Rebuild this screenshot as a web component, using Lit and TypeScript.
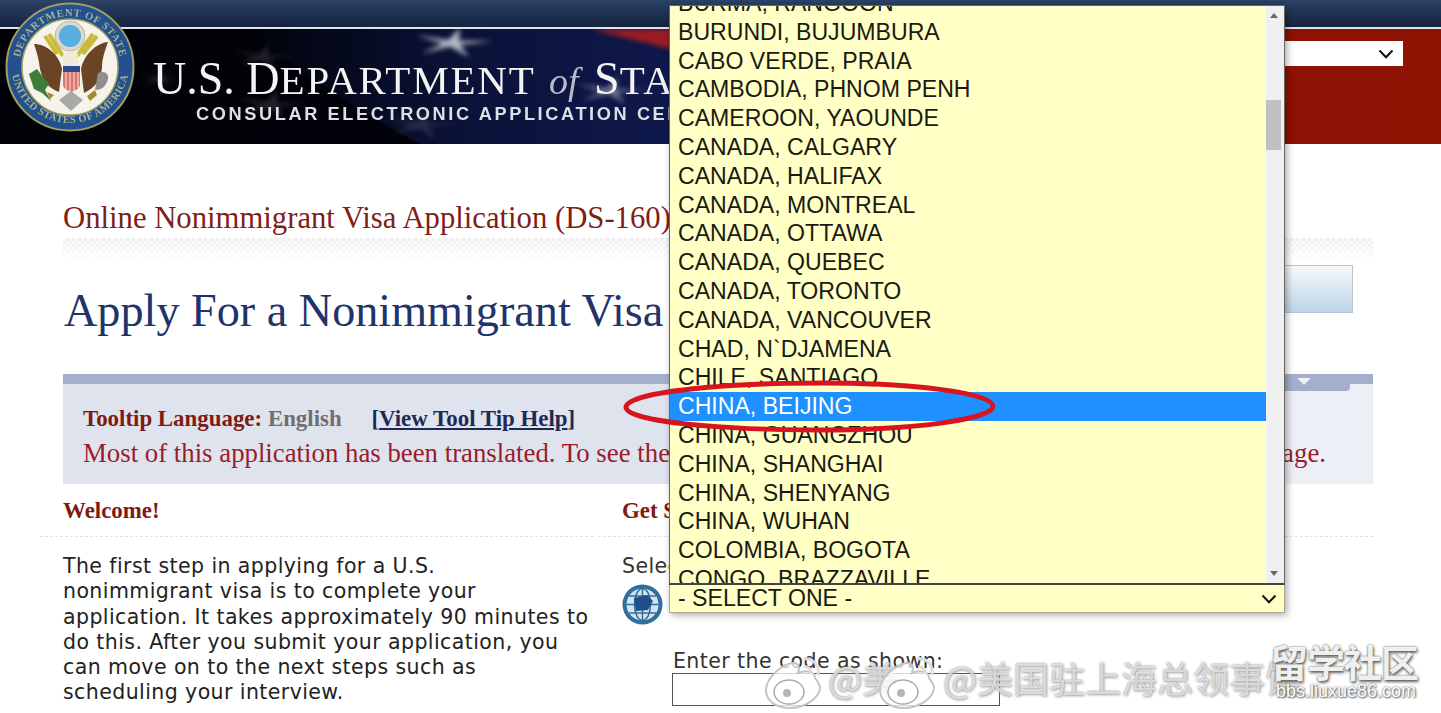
import { LitElement, html, css, svg } from "lit";
import { customElement } from "lit/decorators.js";

const OPTIONS = [
  "BURMA, RANGOON", "BURUNDI, BUJUMBURA", "CABO VERDE, PRAIA", "CAMBODIA, PHNOM PENH",
  "CAMEROON, YAOUNDE", "CANADA, CALGARY", "CANADA, HALIFAX", "CANADA, MONTREAL",
  "CANADA, OTTAWA", "CANADA, QUEBEC", "CANADA, TORONTO", "CANADA, VANCOUVER",
  "CHAD, N`DJAMENA", "CHILE, SANTIAGO", "CHINA, BEIJING", "CHINA, GUANGZHOU",
  "CHINA, SHANGHAI", "CHINA, SHENYANG", "CHINA, WUHAN", "COLOMBIA, BOGOTA", "CONGO, BRAZZAVILLE",
];

const star = (x: number, y: number, r: number, o: number) => {
  const pts: string[] = [];
  for (let i = 0; i < 10; i++) {
    const rad = i % 2 === 0 ? r : r * 0.22;
    const a = -Math.PI / 2 + (i * Math.PI) / 5 + 0.2;
    pts.push(`${(x + rad * Math.cos(a) * 1.6).toFixed(1)},${(y + rad * Math.sin(a) * 0.6).toFixed(1)}`);
  }
  return svg`<polygon points=${pts.join(" ")} fill="#fff" opacity=${o}></polygon>`;
};

const chevron = html`<svg width="16" height="10" viewBox="0 0 16 10"><path d="M1.5 1.5 8 8.2 14.5 1.5" fill="none" stroke="#111" stroke-width="2"/></svg>`;

const weibo = svg`<g>
  <path d="M4 36c0-11 14-25 26-27 7-1 8 5 6 10 8-3 17-2 17 5 1 2 4 4 5 9 0 11-15 21-30 21C14 54 4 47 4 36z" fill="#fff" fill-opacity=".75" stroke="#c4c4c4" stroke-width="2"/>
  <ellipse cx="27" cy="38" rx="15" ry="12" fill="#fff" stroke="#aaa" stroke-width="1.5"/>
  <circle cx="25" cy="39" r="4" fill="#b5b5b5"/>
  <path d="M41 5c9-2 17 6 15 16M42 13c4-1 8 3 7 7" fill="none" stroke="#ddd" stroke-width="3"/>
</g>`;

@customElement("app-root")
export class AppRoot extends LitElement {
  static styles = css`
    :host { display: block; position: relative; height: 713px; overflow: hidden; background: #fff; font-family: "Liberation Serif", serif; }
    .topband { height: 27px; background: linear-gradient(#2b4366, #14233f); border-bottom: 2px solid #dfe4ea; }
    .banner { position: relative; height: 115px; background: linear-gradient(90deg, #010207 0, #02030c 46%, #8a1205 52%, #8e1303 100%); display: flex; justify-content: space-between; overflow: hidden; }
    .flag { position: absolute; inset: 0; }
    .brand { position: relative; padding: 25px 0 0 153px; color: #f4f4f4; white-space: nowrap; }
    .dos { font-size: 46px; line-height: 50px; }
    .dos b { font-weight: 400; font-size: 41px; letter-spacing: 1.8px; }
    .dos i { font-size: 38px; color: #b8bcc8; margin: 0 4px 0 2px; }
    .cons { font: bold 18.2px "Liberation Sans", sans-serif; letter-spacing: 2.6px; margin: -2px 0 0 43px; color: #dcdfe4; }
    .lang { position: relative; margin: 12px 38px 0 0; width: 180px; height: 25px; background: #fff; display: flex; align-items: center; justify-content: flex-end; padding-right: 9px; box-sizing: border-box; }
    .seal { position: absolute; left: 5px; top: 2px; }

    .page-title { margin: 58px 0 0 63px; font-size: 30.7px; line-height: 32px; color: #7f2015; white-space: nowrap; }
    .dots { margin: 4px 68px 0 63px; height: 24px; background: repeating-conic-gradient(#eeeeee 0 25%, #fafafa 0 50%) 0 0 / 6px 6px; -webkit-mask-image: linear-gradient(#000, transparent); mask-image: linear-gradient(#000, transparent); }
    .head { height: 112px; margin: 0 88px 0 64px; display: flex; justify-content: space-between; align-items: flex-start; }
    h1 { margin: 23px 0 0; font-size: 46.2px; line-height: 52px; font-weight: 400; color: #22336b; white-space: nowrap; }
    .btn { margin-top: 3px; width: 200px; height: 48px; box-sizing: border-box; border: 1px solid #b9c6d4; background: linear-gradient(#f6f9fb, #bcd3e6); }

    .notice { margin: 0 68px 0 63px; height: 110px; background: linear-gradient(100deg, transparent 72%, #eceff5 92%), #dfe3ed; border-top: 10px solid #a3afcc; box-sizing: border-box; position: relative; padding: 22px 47px 0 20px; }
    .tab { position: absolute; right: 23px; top: -10px; width: 120px; height: 17px; background: #a3afcc; border-radius: 0 0 4px 0; }
    .tab::after { content: ""; position: absolute; right: 39px; top: 4px; border: 7px solid transparent; border-top: 7px solid #eef0f6; border-bottom: 0; }
    .tip { font-size: 22.9px; line-height: 26px; font-weight: 700; color: #7f1a12; white-space: nowrap; }
    .tip .en { color: #6f6f6f; }
    .tip a { color: #1d2a55; margin-left: 24px; }
    .tip a u { text-decoration: underline; }
    .msg { margin-top: 7px; display: flex; justify-content: space-between; font-size: 26.8px; line-height: 28px; color: #9b1c2b; white-space: nowrap; }

    .cols { display: grid; grid-template-columns: 553px 775px; column-gap: 5px; margin-left: 40px; }
    .col-h { height: 53px; border-bottom: 1px dashed #e2e2e2; padding: 14px 0 0 23px; box-sizing: border-box; font-size: 22.9px; line-height: 26px; font-weight: 700; color: #7f1a12; }
    .col-b { padding: 17px 0 0 23px; font: 20.5px/25.3px "DejaVu Sans", sans-serif; letter-spacing: .42px; color: #222; }
    .second .col-h, .second .col-b { padding-left: 24px; }
    .sel { color: #333; }
    .globe { display: block; margin-top: 5px; }
    .code { margin: 24px 0 0 51px; color: #333; white-space: nowrap; line-height: 25px; }
    .code-input { margin: -1px 0 0 -1px; width: 328px; height: 33px; box-sizing: border-box; border: 1px solid #555; background: #fff; }
    .code.box { margin-top: -1px; }

    .drop { position: absolute; left: 669px; top: 5px; width: 616px; height: 608px; display: flex; flex-direction: column; box-shadow: 2px 2px 7px rgba(0,0,0,.35); }
    .list { height: 580px; box-sizing: border-box; border: 1px solid #666; border-bottom: 2px solid #444; display: flex; background: #ffffc6; overflow: hidden; }
    .rows { flex: 1; overflow: hidden; font: 23.1px/28.8px "Liberation Sans", sans-serif; color: #1a1a12; }
    .rows-in { margin-top: -17px; }
    .row { height: 28.8px; padding-left: 8px; white-space: nowrap; }
    .row.on { background: #1e90ff; color: #fff; }
    .sb { width: 18px; background: #f0f0f0; position: relative; }
    .thumb { position: absolute; left: 0; top: 94px; width: 15px; height: 50px; background: #c1c1c1; }
    .arr { position: absolute; left: 4px; border: 4px solid transparent; }
    .arr.up { top: 7px; border-bottom: 5px solid #666; border-top: 0; }
    .arr.dn { bottom: 7px; border-top: 5px solid #666; border-bottom: 0; }
    .closed { flex: 1; border: 1px solid #a9a98c; border-top: 0; background: #ffffc6; display: flex; align-items: center; justify-content: space-between; padding: 0 7px 0 8px; font: 23.1px "Liberation Sans", sans-serif; color: #1a1a12; }

    .ellipse { position: absolute; left: 622px; top: 378px; pointer-events: none; }
    .wm { position: absolute; left: 762px; top: 640px; width: 679px; height: 73px; pointer-events: none; }
    .wm-logo { position: absolute; top: 14px; }
    .wm-t { position: absolute; top: 15px; font: 36px/44px "Noto Sans CJK SC", sans-serif; color: rgba(255,255,255,.6); text-shadow: 0 0 2px #999, 1px 1px 3px #aaa; white-space: nowrap; }
    .wm-brand { position: absolute; left: 508px; top: 0; font: 700 38px/42px "Noto Sans CJK SC", sans-serif; color: rgba(255,255,255,.92); text-shadow: 0 0 2px #555, 1px 2px 3px #666; white-space: nowrap; letter-spacing: -1px; }
    .wm-url { position: absolute; left: 514px; top: 40px; font: 18px/22px "Liberation Sans", sans-serif; color: #fff; text-shadow: 0 0 2px #555, 1px 1px 2px #666; white-space: nowrap; }
  `;

  private seal() {
    return html`<svg class="seal" width="130" height="130" viewBox="0 0 130 130">
      <defs>
        <path id="t1" d="M14 65a51 51 0 0 1 102 0"></path>
        <path id="t2" d="M6 62a59 59 0 0 0 118 0"></path>
      </defs>
      <circle cx="65" cy="65" r="63.5" fill="#23508f" stroke="#a2a060" stroke-width="2"></circle>
      <circle cx="65" cy="65" r="48" fill="#f6f4ea" stroke="#a2a060" stroke-width="1.5"></circle>
      <text font-family="Liberation Serif, serif" font-size="10.5" font-weight="700" fill="#a9b28a" letter-spacing=".8"><textPath href="#t1" startOffset="50%" text-anchor="middle">DEPARTMENT OF STATE</textPath></text>
      <text font-family="Liberation Serif, serif" font-size="10.5" font-weight="700" fill="#a9b28a" letter-spacing=".4"><textPath href="#t2" startOffset="50%" text-anchor="middle">UNITED STATES OF AMERICA</textPath></text>
      <circle cx="65" cy="34" r="15" fill="#d8d8cc" stroke="#b9b9a8"></circle>
      <circle cx="65" cy="34" r="11" fill="#58aede"></circle>
      <path d="M40 34 52 52 M92 34 78 52 M44 32l14 22M88 32 72 54" stroke="#c9bb3a" stroke-width="4" fill="none"></path>
      <path d="M29 42c12 0 25 10 28 25l-3 23c-10-4-16-10-19-23-1-8-3-17-6-25zM103 40c-3 9-6 16-6 26-2 14-8 20-18 25l-3-24c3-14 15-26 27-27z" fill="#6b4325"></path>
      <path d="M58 52c5-4 11-4 15 0l1 12H58z" fill="#efe9d8"></path>
      <path d="M58 64h17v6H58z" fill="#2b4c8c"></path>
      <path d="M58 70h17v13c0 3-4 5-8.500 7-5-2-8.500-4-8.500-7z" fill="#d9776f"></path>
      <path d="M61 70v17M65 70v19M69 70v19M73 70v16" stroke="#efc8bb" stroke-width="1.400"></path>
      <path d="M24 72l8-5 6 8 6 7-4 6 6 11-9-8-8-4-3-9z" fill="#3d7d37"></path>
      <path d="M93 71c7-3 11 1 10 6-2 8-7 11-13 11z" fill="#8f8f8f"></path>
      <path d="M54 98l12-9 12 9-12 11z" fill="#a9a9a5"></path>
      <path d="M42 90l7 3-4 4zM82 94l8-6 2 5-7 6z" fill="#a48a2d"></path>
    </svg>`;
  }

  render() {
    return html`
      <div class="topband"></div>
      <div class="banner">
        <svg class="flag" width="1441" height="115" viewBox="0 0 1441 115" preserveAspectRatio="none">
          <defs>
            <filter id="b"><feGaussianBlur stdDeviation="2.5"></feGaussianBlur></filter>
            <linearGradient id="n" x1="0" x2="1"><stop offset="0" stop-color="#0a1238" stop-opacity="0"></stop><stop offset=".45" stop-color="#0a1238"></stop><stop offset="1" stop-color="#101a50"></stop></linearGradient>
          </defs>
          <path d="M250 0H720V115H420Q320 60 250 0z" fill="url(#n)"></path>
          <path d="M590 0 720 32V0z" fill="#9b1c22" filter="url(#b)"></path>
          <g filter="url(#b)">
            ${star(452, 14, 26, .7)} ${star(262, 28, 22, .13)} ${star(270, 76, 24, .14)} ${star(420, 96, 26, .12)} ${star(610, 62, 24, .4)} ${star(160, 50, 16, .12)}
          </g>
        </svg>
        <div class="brand">
          <div class="dos">U.S. D<b>EPARTMENT</b> <i>of</i> S<b>TATE</b></div>
          <div class="cons">CONSULAR ELECTRONIC APPLICATION CENTER</div>
        </div>
        <div class="lang">${chevron}</div>
      </div>
      ${this.seal()}

      <div class="page-title">Online Nonimmigrant Visa Application (DS-160)</div>
      <div class="dots"></div>
      <div class="head">
        <h1>Apply For a Nonimmigrant Visa</h1>
        <div class="btn"></div>
      </div>
      <div class="notice">
        <div class="tab"></div>
        <div class="tip">Tooltip Language: <span class="en">English</span> <a>[<u>View Tool Tip Help</u>]</a></div>
        <div class="msg"><span>Most of this application has been translated. To see the</span><span>age.</span></div>
      </div>
      <div class="cols">
        <div>
          <div class="col-h">Welcome!</div>
          <div class="col-b">The first step in applying for a U.S.<br>nonimmigrant visa is to complete your<br>application. It takes approximately 90 minutes to<br>do this. After you submit your application, you<br>can move on to the next steps such as<br>scheduling your interview.</div>
        </div>
        <div class="second">
          <div class="col-h">Get Started</div>
          <div class="col-b">
            <div class="sel">Select a location</div>
            <svg class="globe" width="41" height="41" viewBox="0 0 41 41">
              <circle cx="20.500" cy="20.500" r="20" fill="#2e6f9d"></circle>
              <circle cx="20.500" cy="20.500" r="16" fill="#d5e3ee"></circle>
              <path d="M20.500 4.500v32M4.500 20.500h32M7 12h27M7 29h27" stroke="#2e6f9d" stroke-width="1.500"></path>
              <ellipse cx="20.500" cy="20.500" rx="8" ry="16" fill="none" stroke="#2e6f9d" stroke-width="1.500"></ellipse>
              <path d="M12 14l13-3 6 6-5 9-12 1z" fill="#1f4f86"></path>
            </svg>
            <div class="code">Enter the code as shown:</div>
            <div class="code box"><div class="code-input"></div></div>
          </div>
        </div>
      </div>

      <div class="drop">
        <div class="list">
          <div class="rows"><div class="rows-in">
            ${OPTIONS.map((o) => html`<div class="row ${o === "CHINA, BEIJING" ? "on" : ""}">${o}</div>`)}
          </div></div>
          <div class="sb"><div class="arr up"></div><div class="thumb"></div><div class="arr dn"></div></div>
        </div>
        <div class="closed"><span>- SELECT ONE -</span>${chevron}</div>
      </div>

      <svg class="ellipse" width="378" height="58" viewBox="0 0 378 58">
        <path d="M4 29C6 13 110 5 200 5c92 0 170 10 171 23 1 13-78 24-172 24C104 52 3 44 4 29z" fill="none" stroke="#d8141e" stroke-width="5"></path>
      </svg>

      <div class="wm">
        <svg class="wm-logo" style="left:0" width="64" height="58" viewBox="0 0 64 58">${weibo}</svg>
        <div class="wm-t" style="left:66px">@美</div>
        <svg class="wm-logo" style="left:114px" width="64" height="58" viewBox="0 0 64 58">${weibo}</svg>
        <div class="wm-t" style="left:181px">@美国驻上海总领事馆</div>
        <div class="wm-brand">留学社区</div>
        <div class="wm-url">bbs.liuxue86.com</div>
      </div>
    `;
  }
}
